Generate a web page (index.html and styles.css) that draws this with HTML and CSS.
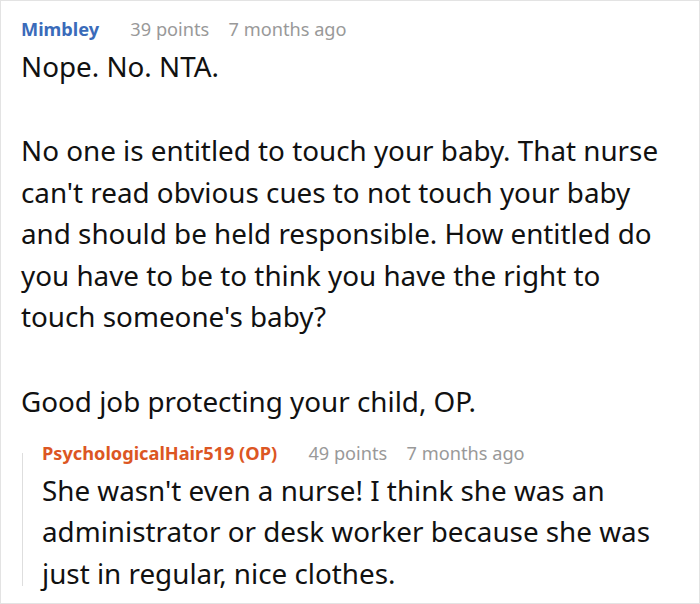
FILE: index.html
```html
<!DOCTYPE html>
<html lang="en">
<head>
<meta charset="utf-8">
<link rel="stylesheet" href="styles.css">
</head>
<body>
<div class="card">
  <div class="meta">
    <span class="author">Mimbley</span>
    <span class="points">39 points</span>
    <span class="time">7 months ago</span>
  </div>
  <div class="body">
    <p>Nope. No. NTA.</p>
    <p>No one is entitled to touch your baby. That nurse<br>can't read obvious cues to not touch your baby<br>and should be held responsible. How entitled do<br>you have to be to think you have the right to<br>touch someone's baby?</p>
    <p>Good job protecting your child, OP.</p>
  </div>
  <div class="reply">
    <div class="rail"></div>
    <div class="reply-content">
      <div class="meta">
        <span class="author op">PsychologicalHair519 (OP)</span>
        <span class="points">49 points</span>
        <span class="time">7 months ago</span>
      </div>
      <div class="body">
        <p>She wasn't even a nurse! I think she was an<br>administrator or desk worker because she was<br>just in regular, nice clothes.</p>
      </div>
    </div>
  </div>
</div>
</body>
</html>
```
FILE: styles.css
```css
html, body {
  margin: 0;
  padding: 0;
  background: #fff;
}
.card {
  box-sizing: border-box;
  width: 700px;
  height: 604px;
  border: 1px solid #e3e3e3;
  padding: 16px 8px 0 20px;
  font-family: "Noto Sans", "DejaVu Sans", sans-serif;
  color: #111;
  overflow: hidden;
}
.meta {
  font-size: 18.2px;
  line-height: 24px;
  white-space: nowrap;
}
.author {
  font-weight: 700;
  color: #3a6bba;
}
.author.op {
  color: #dc5623;
}
.points {
  color: #999;
  margin-left: 26.5px;
}
.time {
  color: #999;
  margin-left: 14.5px;
}
.body {
  margin-top: 4.5px;
  font-size: 27.8px;
  line-height: 41.5px;
  white-space: nowrap;
}
.body p {
  margin: 0 0 43px;
}
.body p:last-child {
  margin-bottom: 0;
}
.reply {
  display: flex;
  margin-top: 19px;
}
.rail {
  width: 1px;
  background: #dedede;
  margin: 12px 0 8px 1px;
  flex: none;
}
.reply-content {
  margin-left: 19px;
}
```
